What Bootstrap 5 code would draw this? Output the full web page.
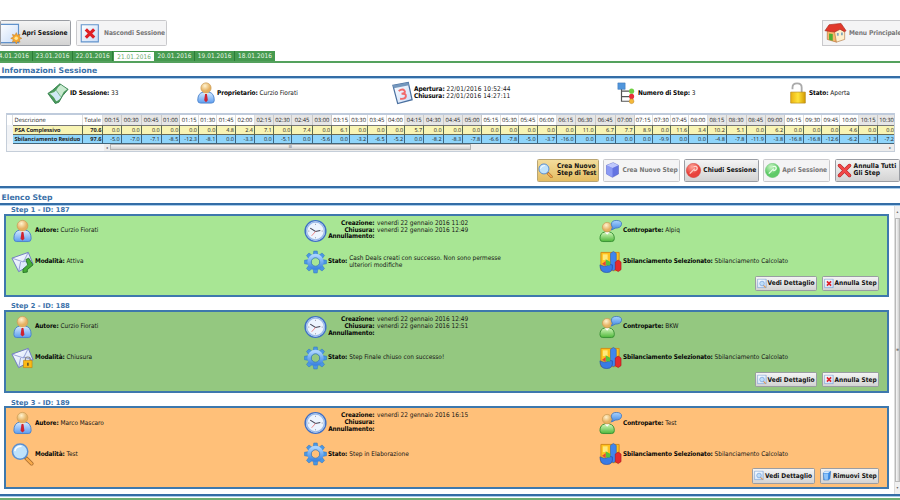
<!DOCTYPE html>
<html lang="it">
<head>
<meta charset="utf-8">
<title>Sessioni</title>
<link href="https://cdn.jsdelivr.net/npm/bootstrap@5.3.0/dist/css/bootstrap.min.css" rel="stylesheet">
<style>
body{width:900px;height:500px;overflow:hidden;background:#fff;color:#151515;font:6.5px/7px "DejaVu Sans Condensed","DejaVu Sans",sans-serif;font-stretch:condensed;text-rendering:geometricPrecision}
b{font-weight:700;letter-spacing:-.12px;color:#050505}
svg{flex:none;display:block}
.top-bar{height:51px;padding-top:20px}
.tool-btn{display:flex;align-items:center;font:700 6.6px/8px "DejaVu Sans Condensed","DejaVu Sans",sans-serif;font-stretch:condensed;color:#111;border:1px solid #9a9da3;border-radius:1.5px;background:linear-gradient(#f4f4f4,#d3d3d3);padding:0;white-space:nowrap;text-align:left;flex:none}
.tool-btn.off{color:#777;background:#f4f4f5;border-color:#c9c9cc}
.tool-btn.sel{background:linear-gradient(#f3dc9b,#e4bd62);border-color:#b9a573}
.top-bar .tool-btn{height:26px}
.w-apri{width:71px}
.w-nasc{width:91px;margin-left:5px;padding-left:3px}
.w-nasc span{letter-spacing:-.08px}
.w-menu{width:78px;padding-left:1px;border-right:0;border-radius:0}
.day-tabs{height:12px;border-bottom:2px solid #54a15d;font-size:6.4px;box-sizing:border-box}
.day-tabs span{width:40.2px;height:10px;background:#459a4f;color:#e6f6e6;border-right:1px solid #2c7c38;display:flex;align-items:center;justify-content:center;flex:none;letter-spacing:.1px;padding-top:1px}
.day-tabs span:first-child{justify-content:flex-end;width:33px;padding-right:3px}
.day-tabs span.now{background:#fff;color:#6cad70;border:1px solid #459a4f;border-bottom:0;width:41.5px}
.day-tabs span:last-child{border-right:0;width:39.5px}
.sec-title{font:700 7.7px/10px "DejaVu Sans",sans-serif;font-stretch:normal;color:#3a70a8;padding-left:1.5px}
.rule{height:3px;background:linear-gradient(#346da6 0 67%,#a9cdec 67%)}
.info-row{height:34px;padding-top:1px}
.info-row>div{height:26px;display:flex;align-items:center;flex:none}
.grid-box{margin:0 6px;width:889px;height:39px;border:1px solid #c5ced9;border-top:2px solid #bfcbdc;overflow:hidden;background:#f5f6f8}
.hours{width:889px;table-layout:fixed;border-collapse:separate;border-spacing:0;font:5.5px/6px "Open Sans","Noto Sans",sans-serif;color:#252525;margin:0}
.hours td,.hours th{padding:0 1px 0 0;overflow:hidden;white-space:nowrap;border-right:1px solid #5c6b52;text-align:right;height:9.3px;vertical-align:middle;font-weight:400}
.hours th{height:10.4px;text-align:center;border-right-color:#ddd;background:#fff;font-size:5.8px;padding:0}
.hours th.alt{background:#e6e6e6;border-right-color:#c9c9c9}
.hours .psa td{background:#f8f4b4;border-bottom:1px solid #6b6b55;border-top:1px solid #777}
.hours .sbi td{background:#8fd5fb;border-bottom:1px solid #44667a;border-right-color:#3c6480}
.hours .psa td:first-child,.hours .sbi td:first-child{background:#f1f3f6;border:0}
.hours .lbl{text-align:left!important;padding-left:1.5px!important;padding-right:0!important}
.hours td.fw-bold{font-weight:700;font-size:5.6px;letter-spacing:-.06px}
.h-scroll{margin-left:97px;height:7px;background:#ececec;display:flex;align-items:center;justify-content:space-between;padding:0 3px 0 2px;color:#555;font-size:4px}
.h-thumb{width:361px;height:6px;margin-right:auto;margin-left:2px;background:linear-gradient(#f6f6f6,#cfcfcf);border:1px solid #b2b2b2;line-height:3px;text-align:center}
.act-row{height:34px;padding:7px 0 0 537px;gap:4.4px}
.act-row .tool-btn{height:22.5px;line-height:7px}
.act-row .tool-btn span{margin-left:1px}
.act-row .off span{letter-spacing:-.05px}
.steps{height:288px}
.step-title{font:700 6.7px/8px "DejaVu Sans",sans-serif;font-stretch:normal;height:7.5px;color:#3a70a8;padding-left:11px;white-space:pre}
.step-box{width:885px;height:83.3px;margin:0 0 5.5px 4px;border:2px solid #3e78ad;padding:2px 8px 0 5px;font-size:6.45px}
.step-grid{display:grid;grid-template-columns:293px 295px 1fr;grid-auto-rows:31px}
.step-grid>div{display:flex;align-items:center;height:26px}
.step-grid>div>svg{margin-right:1px}
.step-grid .stamp{display:grid;grid-template-columns:47px auto;column-gap:2.5px;line-height:6.9px;margin-top:-1px;margin-left:-.5px}
.stamp b{text-align:right}
.st-text{margin-left:2px}
.step-btns{display:flex;justify-content:flex-end;gap:5px;margin-top:-4px}
.step-btns .tool-btn{height:15.5px;padding:0 1px;gap:1px;font-size:6.5px}
.v-scroll{width:6px;background:#f0f0f0;border-left:1px solid #ddd;color:#666;font-size:4px;line-height:12px;text-align:center;display:flex;flex-direction:column}
.v-thumb{flex:1;background:linear-gradient(90deg,#f8f8f8,#d1d1d1);border:1px solid #b9b9b9;display:flex;align-items:center;justify-content:center}
.foot-line{height:2px;margin-top:1px;background:#6dad73}
</style>
<script src="https://cdn.jsdelivr.net/npm/bootstrap@5.3.0/dist/js/bootstrap.bundle.min.js"></script>
</head>
<body>
<svg width="0" height="0" class="position-absolute">
<defs>
<radialGradient id="gSkin" cx=".4" cy=".3"><stop offset="0" stop-color="#fff3cf"/><stop offset="1" stop-color="#e5b060"/></radialGradient>
<linearGradient id="gBlue" x2="0" y2="1"><stop offset="0" stop-color="#a9d3ff"/><stop offset="1" stop-color="#3f86e0"/></linearGradient>
<linearGradient id="gShirt" x2="0" y2="1"><stop offset="0" stop-color="#d8ecff"/><stop offset="1" stop-color="#5c9df0"/></linearGradient>
<linearGradient id="gGreen" x2="0" y2="1"><stop offset="0" stop-color="#d5f7bd"/><stop offset="1" stop-color="#4eb83a"/></linearGradient>
<linearGradient id="gPaper" x2="1" y2="1"><stop offset="0" stop-color="#fff"/><stop offset="1" stop-color="#c8dcf8"/></linearGradient>
<linearGradient id="gGold" x2="1"><stop offset="0" stop-color="#eab010"/><stop offset=".5" stop-color="#ffe33a"/><stop offset="1" stop-color="#d39a00"/></linearGradient>
<radialGradient id="gRed" cx=".4" cy=".25"><stop offset="0" stop-color="#ffa79a"/><stop offset="1" stop-color="#e8433c"/></radialGradient>
<radialGradient id="gBall" cx=".4" cy=".25"><stop offset="0" stop-color="#c9f5c5"/><stop offset="1" stop-color="#5fca68"/></radialGradient>
</defs>
<symbol id="user" viewBox="0 0 24 24"><path d="M3 20Q3 12 9 11h6q6 1 6 9 0 3-3 3H6q-3 0-3-3z" fill="url(#gShirt)" stroke="#4b83cc"/><path d="M9 11l3 4 3-4z" fill="#fff"/><path d="M11 13h2l1 7-2 2-2-2z" fill="#cf2330"/><circle cx="12" cy="6.5" r="5.6" fill="url(#gSkin)" stroke="#c79a55" stroke-width=".7"/></symbol>
<symbol id="book" viewBox="0 0 24 24"><path d="M1 12.5L6 9l8-7 9 6-6 7-4 7-4 1.5z" fill="#4b9a5c" stroke="#33814f" stroke-linejoin="round"/><path d="M2 12q5 1 8-3 2-4 5-6l7 5q-4 2-6 7-2 5-6 6-2-5-8-9z" fill="#c9ead0"/><path d="M4 12.5q4 0 6-3l5 7q-2 3-5 4-2-5-6-8z" fill="#cfe9f6"/><path d="M10 9l5 7" stroke="#6fae8c" stroke-width=".9"/></symbol>
<symbol id="cal" viewBox="0 0 24 24"><path d="M2 4l16-3 4 18-15 4z" fill="url(#gPaper)" stroke="#496f9f" stroke-width="1.3"/><path d="M2 4l16-3 .8 3L3 7z" fill="#7497bd"/><path d="M8 10q4-3 6-.5t-3 3.3q5-.5 4.5 2.7T9.5 18" fill="none" stroke="#f16a6a" stroke-width="2"/></symbol>
<symbol id="tree" viewBox="0 0 24 24"><path d="M6 6v15h9M6 10h9M6 16h9" fill="none" stroke="#555" stroke-width="1.3"/><path d="M2 1h8v7H2z" fill="#5096dc" stroke="#376fae" stroke-width=".5"/><circle cx="17" cy="10" r="2.8" fill="#6fd043"/><circle cx="17" cy="15.7" r="2.8" fill="#e8303a"/><circle cx="17" cy="21" r="2.6" fill="#f5b93a" stroke="#b4802a" stroke-width=".5"/></symbol>
<symbol id="lock" viewBox="0 0 24 24"><path d="M6 8V6q0-4.500 5-4.500T16 6v6" fill="none" stroke="#aaa" stroke-width="2"/><path d="M4 11h16v12H4z" fill="url(#gGold)" stroke="#b38719" stroke-width=".7"/></symbol>
<symbol id="clock" viewBox="0 0 24 24"><circle cx="12" cy="12" r="10.8" fill="#edf4fe" stroke="#3e6fc6" stroke-width="1.5"/><circle cx="12" cy="12" r="9.3" fill="none" stroke="#9bbbe8" stroke-width="1.5"/><path d="M6.5 9l5.5 3.500 5-1" fill="none" stroke="#445" stroke-width="1.1"/><path d="M12 12.5L8 17" stroke="#e77" stroke-width=".9"/><g fill="#889"><circle cx="12" cy="5" r=".6"/><circle cx="12" cy="19" r=".6"/><circle cx="19" cy="12" r=".6"/><circle cx="5" cy="12" r=".6"/></g></symbol>
<symbol id="gear" viewBox="0 0 24 24"><g fill="#4a97e3" stroke="#2f73bd" stroke-width=".5"><path id="tooth" d="M9.5 5l.7-4.500h3.600l.7 4.500v14l-.7 4.500h-3.600L9.500 19z"/><use href="#tooth" transform="rotate(45 12 12)"/><use href="#tooth" transform="rotate(90 12 12)"/><use href="#tooth" transform="rotate(135 12 12)"/></g><circle cx="12" cy="12" r="6.5" fill="none" stroke="url(#gBlue)" stroke-width="4"/><circle cx="12" cy="12" r="4.4" fill="var(--hole)" stroke="#3776b8" stroke-width=".8"/></symbol>
<symbol id="chat" viewBox="0 0 24 24"><path d="M1 20q0-6 5-7h5q5 1 5 7 0 3-3 3H4q-3 0-3-3z" fill="url(#gGreen)" stroke="#3a9135"/><path d="M6 13l2.500 3 2.500-3z" fill="#fff"/><circle cx="8.5" cy="8" r="5" fill="url(#gSkin)" stroke="#c79a55" stroke-width=".7"/><path d="M14 8l-1 3 4-2q6 0 6.500-4T18 1q-5 0-5 4 0 2 1 3z" fill="url(#gBlue)" stroke="#4378bf" stroke-width=".9"/></symbol>
<symbol id="chart" viewBox="0 0 24 24"><path d="M2 2h19v19H2z" fill="#ffc21e" stroke="#d28a16"/><path d="M4 4h5v6H4z" fill="#ffe97a"/><path d="M12 3l3-2 3 2v16l-3 2-3-2z" fill="#3f86ee" stroke="#245cb5" stroke-width=".6"/><path d="M17 12l3-2 3 2v8l-3 2-3-2z" fill="#e52a2d" stroke="#a9151d" stroke-width=".6"/><path d="M1 15q0 8 7 8t6-8q-1-1-6 1-3 1-7-1z" fill="#397be4" stroke="#234eaa" stroke-width=".7"/><path d="M7 15V9l5 3-1 4z" fill="#54c43d"/><path d="M3 14l4-3v5z" fill="#e5433a"/></symbol>
<symbol id="mail" viewBox="0 0 24 24"><path d="M1 8l17-6 5 12-15 8z" fill="url(#gPaper)" stroke="#6f79c3"/><path d="M1 8l12 4 5-10M8 22l2-10M23 14l-10-3" fill="none" stroke="#7f8acb" stroke-width=".8"/></symbol>
<symbol id="mailgo" viewBox="0 0 24 24"><use href="#mail"/><path d="M15.5 9.500l3-1.500 4.500 7-6 5v2.500l-4.500.5v-3.500l5-4.500z" fill="#46ac36" stroke="#1f6f24" stroke-width=".9" stroke-linejoin="round"/></symbol>
<symbol id="maillock" viewBox="0 0 24 24"><use href="#mail"/><path d="M15 15v-2q0-2 2.500-2t2.500 2v2" fill="none" stroke="#888" stroke-width="1.2"/><path d="M13 14.500h9V22h-9z" fill="#fcb914" stroke="#bd7c0b" stroke-width=".6"/><path d="M17 17h1.300v3H17z" fill="#333"/></symbol>
<symbol id="lens" viewBox="0 0 24 24"><path d="M15.5 16l6 6" stroke="#a3682c" stroke-width="4" stroke-linecap="round"/><path d="M16.5 17l5 5" stroke="#f7a94b" stroke-width="2.6" stroke-linecap="round"/><circle cx="9.5" cy="9.5" r="8" fill="#bfe2fb" stroke="#5b8fd0" stroke-width="1.6"/><path d="M4 9q1-5 7-5" fill="none" stroke="#fff" stroke-width="1.5"/></symbol>
<symbol id="page" viewBox="0 0 24 24"><path d="M1.5 1.500h20.500v20.500h-20.500z" fill="url(#gPaper)" stroke="#6092cc" stroke-width="1.3"/></symbol>
<symbol id="newdoc" viewBox="0 0 24 24"><path d="M-2 1.500h22v21h-22z" fill="url(#gPaper)" stroke="#6092cc" stroke-width="1.3"/><path d="M17.5 11l1.200 3 3-1-1 3 3 1.500-3 1.400 1 3-3-1-1.200 3-1.500-3-3 1 1.200-3-3-1.400 3-1.500-1.200-3 3 1z" fill="#f8a92d" stroke="#c8822b" stroke-width=".7"/><circle cx="17.4" cy="17.5" r="2" fill="#ffe798"/></symbol>
<symbol id="xdoc" viewBox="0 0 24 24"><use href="#page"/><path d="M7 7l10 10M17 7L7 17" stroke="#df2027" stroke-width="3.8"/></symbol>
<symbol id="lensdoc" viewBox="0 0 24 24"><use href="#page"/><path d="M15 16l6 6" stroke="#e49a52" stroke-width="3"/><circle cx="12" cy="12" r="5.5" fill="#bfddf8" stroke="#6d9bd5" stroke-width="1.5"/></symbol>
<symbol id="home" viewBox="0 0 24 24"><path d="M3 9h10v13l-10-3z" fill="#f9b56c" stroke="#a7652d" stroke-width=".6"/><path d="M11 11l4-5 7 5v8l-9 3z" fill="#fff0cc" stroke="#a7652d" stroke-width=".6"/><path d="M5 12.500l4 .5v7.500l-4-1.200z" fill="#4dae30"/><path d="M.5 9.500L5 3l13-1.500 5.500 8-1.500 1-5-2.500-6 3z" fill="#e1382b" stroke="#a72a1e" stroke-width=".7"/><path d="M13.5 12h2v3h-2zM18 11.500h2v3h-2z" fill="#86a9bb"/></symbol>
<symbol id="cube" viewBox="0 0 24 24"><path d="M3 5l10-4 8 4v13l-9 5-9-5z" fill="#6474e2" stroke="#4a55b4" stroke-width=".7"/><path d="M3 5l9 4v14l-9-5z" fill="#8b9af4"/><path d="M3 5l10-4 8 4-9 4z" fill="#bfc8fc"/></symbol>
<symbol id="redball" viewBox="0 0 24 24"><circle cx="12" cy="12" r="11.5" fill="url(#gRed)" stroke="#c9302b" stroke-width=".6"/><path d="M6 17l8-8M12 6q5-2 6 2 0 4-5 4" fill="none" stroke="#ffd0c8" stroke-width="2"/></symbol>
<symbol id="greenball" viewBox="0 0 24 24"><circle cx="12" cy="12" r="11.5" fill="url(#gBall)" stroke="#5fb967" stroke-width=".6"/><path d="M6 17l8-8M12 6q5-2 6 2 0 4-5 4" fill="none" stroke="#eaffea" stroke-width="2"/></symbol>
<symbol id="cross" viewBox="0 0 24 24"><path d="M4 4l16 16M20 4L4 20" stroke="#a91c20" stroke-width="5.6" stroke-linecap="round"/><path d="M4 4l16 16M20 4L4 20" stroke="#f14747" stroke-width="4" stroke-linecap="round"/></symbol>
<symbol id="bin" viewBox="0 0 24 24"><path d="M3 6l5-4h13l-2 18-4 3H4z" fill="#3a8ae4" stroke="#2461aa"/><path d="M4 7h11l-1 15H6z" fill="#8cc3fa"/><path d="M3 6l5-4h12l-5 4z" fill="#d8ecff"/></symbol>
</svg>

<header class="top-bar d-flex">
  <button class="tool-btn w-apri"><svg width="21" height="21"><use href="#newdoc"/></svg><span class="ms-auto me-1">Apri Sessione</span></button>
  <button class="tool-btn off w-nasc"><svg width="20" height="21"><use href="#xdoc"/></svg><span class="ms-1">Nascondi Sessione</span></button>
  <button class="tool-btn off w-menu ms-auto"><svg width="23" height="22"><use href="#home"/></svg><span style="margin-left:2px;letter-spacing:-.1px">Menu Principale</span></button>
</header>
<nav class="day-tabs d-flex overflow-hidden">
  <span>24.01.2016</span><span>23.01.2016</span><span>22.01.2016</span><span class="now">21.01.2016</span><span>20.01.2016</span><span>19.01.2016</span><span>18.01.2016</span>
</nav>
<div class="sec-title" style="height:13px;line-height:15.5px">Informazioni Sessione</div>
<div class="rule"></div>
<section class="info-row d-flex">
  <div style="width:148px;margin-left:47px"><svg width="22" height="22"><use href="#book"/></svg><span style="margin-left:1px"><b>ID Sessione:</b> 33</span></div>
  <div style="width:196px"><svg width="22" height="24"><use href="#user"/></svg><span><b>Proprietario:</b> Curzio Fiorati</span></div>
  <div style="width:225px"><svg width="23" height="24"><use href="#cal"/></svg><span style="letter-spacing:.12px"><b>Apertura:</b> 22/01/2016 10:52:44<br><b>Chiusura:</b> 22/01/2016 14:27:11</span></div>
  <div style="width:171px"><svg width="22" height="24"><use href="#tree"/></svg><span><b>Numero di Step:</b> 3</span></div>
  <div><svg width="22" height="24"><use href="#lock"/></svg><span><b>Stato:</b> Aperta</span></div>
</section>
<div class="grid-box">
  <table class="hours"><colgroup id="cols"></colgroup><thead><tr id="hrs"></tr></thead><tbody><tr class="psa" id="psa"></tr><tr class="sbi" id="sbi"></tr></tbody></table>
  <div class="h-scroll"><span>◂</span><div class="h-thumb">III</div><span>▸</span></div>
</div>
<div class="act-row d-flex">
  <button class="tool-btn sel" style="width:62px"><svg width="15" height="15"><use href="#lens"/></svg><span class="ps-1 ms-0">Crea Nuovo<br>Step di Test</span></button>
  <button class="tool-btn off" style="width:76.5px"><svg width="17" height="16"><use href="#cube"/></svg><span>Crea Nuovo Step</span></button>
  <button class="tool-btn" style="width:74.5px"><svg width="17" height="15"><use href="#redball"/></svg><span>Chiudi Sessione</span></button>
  <button class="tool-btn off" style="width:67px"><svg width="17" height="15"><use href="#greenball"/></svg><span>Apri Sessione</span></button>
  <button class="tool-btn" style="width:65px"><svg width="17" height="15"><use href="#cross"/></svg><span>Annulla Tutti<br>Gli Step</span></button>
</div>
<div class="rule"></div>
<div class="sec-title" style="height:14px;line-height:18px">Elenco Step</div>
<div class="rule"></div>
<main class="steps d-flex">
  <div class="flex-grow-1" id="steps"></div>
  <div class="v-scroll"><span>▴</span><div class="v-thumb">≡</div><span>▾</span></div>
</main>
<div class="rule"></div>
<div class="foot-line"></div>

<script>
const edges=[103.3,121.7,141.7,161.7,180.3,199,217.3,236,255,273.7,292.5,312.7,332.3,350,368.3,386.7,405.3,424.3,443.7,463.3,482.3,500.7,519.3,537.7,557,575.7,595.7,616,634.7,653,671,689.3,708,727,746.7,766,785.3,804,822.7,840.7,859.3,878.3,896];
const psa="0.0 0.0 0.0 0.0 0.0 0.0 4.8 2.4 7.1 0.0 7.4 0.0 6.1 0.0 0.0 0.0 5.7 0.0 0.0 0.0 0.0 0.0 0.0 0.0 0.0 11.0 6.7 7.7 8.9 0.0 11.6 3.4 10.2 5.1 0.0 6.2 0.0 0.0 0.0 4.6 0.0 0.0".split(" ");
const sbi="-5.0 -7.0 -7.1 -8.5 -12.3 -8.1 0.0 -3.3 0.0 -5.1 0.0 -5.6 0.0 -3.2 -6.5 -5.2 0.0 -8.2 -8.3 -7.8 -6.6 -7.8 -5.0 -3.7 -16.0 0.0 0.0 0.0 0.0 -9.9 0.0 0.0 -4.8 -7.8 -11.9 -3.8 -16.8 -16.8 -12.6 -6.2 -1.3 -7.2".split(" ");
const $=id=>document.getElementById(id);
let widths=[6,70,20.3];
for(let i=1;i<edges.length;i++)widths.push(edges[i]-edges[i-1]);
$("cols").innerHTML=widths.map(w=>`<col style="width:${w.toFixed(1)}px">`).join("");
$("hrs").innerHTML='<th></th><th class="lbl">Descrizione</th><th>Totale</th>'+psa.map((_,i)=>{
  const m=(i+1)*15,t=String(m/60|0).padStart(2,"0")+":"+String(m%60).padStart(2,"0");
  return `<th class="${(i>>2)%2?"":"alt"}">${t}</th>`}).join("");
const row=(n,t,v)=>`<td></td><td class="lbl fw-bold">${n}</td><td class="fw-bold">${t}</td>`+v.map(x=>`<td>${x}</td>`).join("");
$("psa").innerHTML=row("PSA Complessivo","70.6",psa);
$("sbi").innerHTML=row("Sbilanciamento Residuo","97.6",sbi);

const steps=[
 {n:1,id:187,bg:"#a8e694",who:"Curzio Fiorati",icon:"mailgo",mode:"Attiva",cr:"venerdì 22 gennaio 2016 11:02",ch:"venerdì 22 gennaio 2016 12:49",st:"Cash Deals creati con successo. Non sono permesse<br>ulteriori modifiche",cp:"Alpiq",bi:"xdoc",bt:"Annulla Step",w:[62,57.5]},
 {n:2,id:188,bg:"#94c880",who:"Curzio Fiorati",icon:"maillock",mode:"Chiusura",cr:"venerdì 22 gennaio 2016 12:49",ch:"venerdì 22 gennaio 2016 12:51",st:"Step Finale chiuso con successo!",cp:"BKW",bi:"xdoc",bt:"Annulla Step",w:[62,57.5]},
 {n:3,id:189,bg:"#ffc079",who:"Marco Mascaro",icon:"lens",mode:"Test",cr:"venerdì 22 gennaio 2016 16:15",ch:"",st:"Step in Elaborazione",cp:"Test",bi:"bin",bt:"Rimuovi Step",w:[63,59]}];
const ic=(n,w=23,h=24)=>`<svg width="${w}" height="${h}"><use href="#${n}"/></svg>`;
$("steps").innerHTML=steps.map(s=>`
<div class="step-title">Step ${s.n} - ID: ${s.id}</div>
<section class="step-box" style="background:${s.bg};--hole:${s.bg}">
 <div class="step-grid">
  <div>${ic("user")}<span><b>Autore:</b> ${s.who}</span></div>
  <div>${ic("clock")}<div class="stamp"><b>Creazione:</b><span>${s.cr}</span><b>Chiusura:</b><span>${s.ch}</span><b>Annullamento:</b></div></div>
  <div>${ic("chat")}<span><b>Controparte:</b> ${s.cp}</span></div>
  <div>${ic(s.icon)}<span><b>Modalità:</b> ${s.mode}</span></div>
  <div>${ic("gear")}<b>Stato:</b><span class="st-text">${s.st}</span></div>
  <div>${ic("chart")}<span><b>Sbilanciamento Selezionato:</b> Sbilanciamento Calcolato</span></div>
 </div>
 <div class="step-btns"><button class="tool-btn" style="width:${s.w[0]}px">${ic("lensdoc",10,11)}Vedi Dettaglio</button><button class="tool-btn" style="width:${s.w[1]}px">${ic(s.bi,10,11)}${s.bt}</button></div>
</section>`).join("");
</script>
</body>
</html>
